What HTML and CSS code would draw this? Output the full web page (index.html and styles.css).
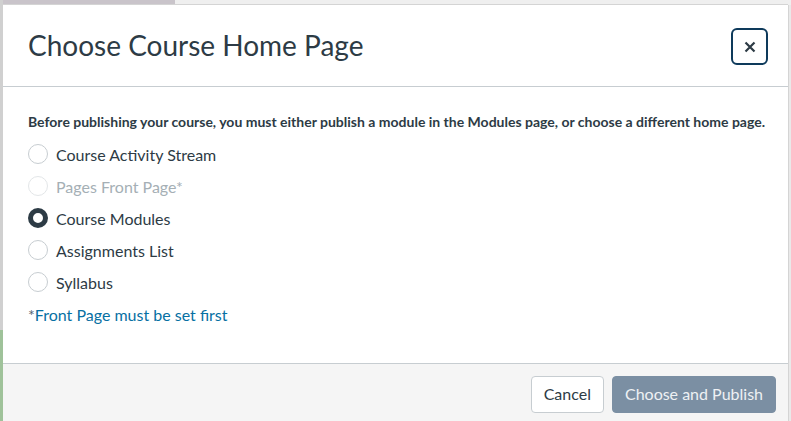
FILE: index.html
```html
<!DOCTYPE html>
<html>
<head>
<meta charset="utf-8">
<link rel="stylesheet" href="styles.css">
</head>
<body>
<div class="dialog">
  <div class="header">
    <h1 class="title">Choose Course Home Page</h1>
    <button class="close" aria-label="Close">
      <svg width="12" height="12" viewBox="0 0 12 12"><path d="M1.5 1.5 L10.5 10.5 M10.5 1.5 L1.5 10.5" stroke="#2d3b45" stroke-width="2.2" stroke-linecap="butt"/></svg>
    </button>
  </div>
  <div class="body">
    <p class="intro">Before publishing your course, you must either publish a module in the Modules page, or choose a different home page.</p>
    <div class="options">
      <label class="option"><span class="radio"></span><span class="label">Course Activity Stream</span></label>
      <label class="option disabled"><span class="radio"></span><span class="label">Pages Front Page*</span></label>
      <label class="option checked"><span class="radio"></span><span class="label">Course Modules</span></label>
      <label class="option"><span class="radio"></span><span class="label">Assignments List</span></label>
      <label class="option"><span class="radio"></span><span class="label">Syllabus</span></label>
    </div>
    <p class="note"><span class="ast">*</span>Front Page must be set first</p>
  </div>
  <div class="footer">
    <button class="btn cancel">Cancel</button>
    <button class="btn primary">Choose and Publish</button>
  </div>
</div>
</body>
</html>
```
FILE: styles.css
```css
html, body {
  margin: 0;
  padding: 0;
  height: 100%;
  overflow: hidden;
}
body {
  font-family: Lato, "Liberation Sans", sans-serif;
  background:
    linear-gradient(to bottom, #d0d0d0 0, #d0d0d0 330px, #9fc29a 330px) left top / 3px 100% no-repeat,
    linear-gradient(to right, #c9c4ca 0, #c9c4ca 175px, #efefef 175px) left top / 100% 5px no-repeat,
    #e9e9e9;
}
.dialog {
  margin: 5px 0 0 3px;
  width: 785px;
  height: 416px;
  background: #fff;
  box-shadow: 1px 0 0 #d4d4d4, 0 -1px 0 #d4d4d4;
  display: flex;
  flex-direction: column;
  color: #2d3b45;
}
.header {
  height: 81px;
  flex: none;
  border-bottom: 1px solid #c7cdd1;
  display: flex;
  align-items: center;
  justify-content: space-between;
  padding: 0 20px 0 25px;
}
.title {
  margin: 0 0 1px;
  font-size: 28px;
  font-weight: 400;
  color: #2d3b45;
}
.close {
  width: 37px;
  height: 37px;
  border: 2px solid #0e3a5b;
  border-radius: 6px;
  background: #fff;
  display: flex;
  align-items: center;
  justify-content: center;
  padding: 0;
  margin-top: 2px;
}
.body {
  flex: 1;
  padding: 0 25px;
  border-bottom: 1px solid #c7cdd1;
}
.intro {
  margin: 25px 0 0;
  font-size: 14px;
  font-weight: 700;
  line-height: 20px;
  white-space: nowrap;
}
.options {
  display: flex;
  flex-direction: column;
  gap: 12px;
  margin-top: 12px;
}
.option {
  display: flex;
  align-items: center;
  gap: 8px;
  height: 20px;
  font-size: 16px;
}
.radio {
  width: 20px;
  height: 20px;
  box-sizing: border-box;
  border: 1px solid #c7cdd1;
  border-radius: 50%;
  background: #fff;
}
.option.disabled {
  color: #a5afb5;
}
.option.disabled .radio {
  border-color: #e3e6e8;
}
.option.checked .radio {
  border: 5px solid #2d3b45;
}
.note {
  margin: 13px 0 0;
  font-size: 16px;
  line-height: 20px;
  color: #0770a3;
}
.ast {
  color: #556572;
}
.footer {
  height: 57px;
  flex: none;
  box-sizing: border-box;
  background: #f5f5f5;
  display: flex;
  justify-content: flex-end;
  align-items: flex-start;
  gap: 8px;
  padding: 12px 12px 0 0;
}
.btn {
  height: 37px;
  font-family: Lato, "Liberation Sans", sans-serif;
  font-size: 16px;
  line-height: 1;
  border-radius: 4px;
  padding: 0 12px 2px;
}
.cancel {
  background: #fff;
  border: 1px solid #c7cdd1;
  color: #2d3b45;
}
.primary {
  background: #7b8fa3;
  border: 1px solid #7b8fa3;
  color: #eef1f4;
}
```
